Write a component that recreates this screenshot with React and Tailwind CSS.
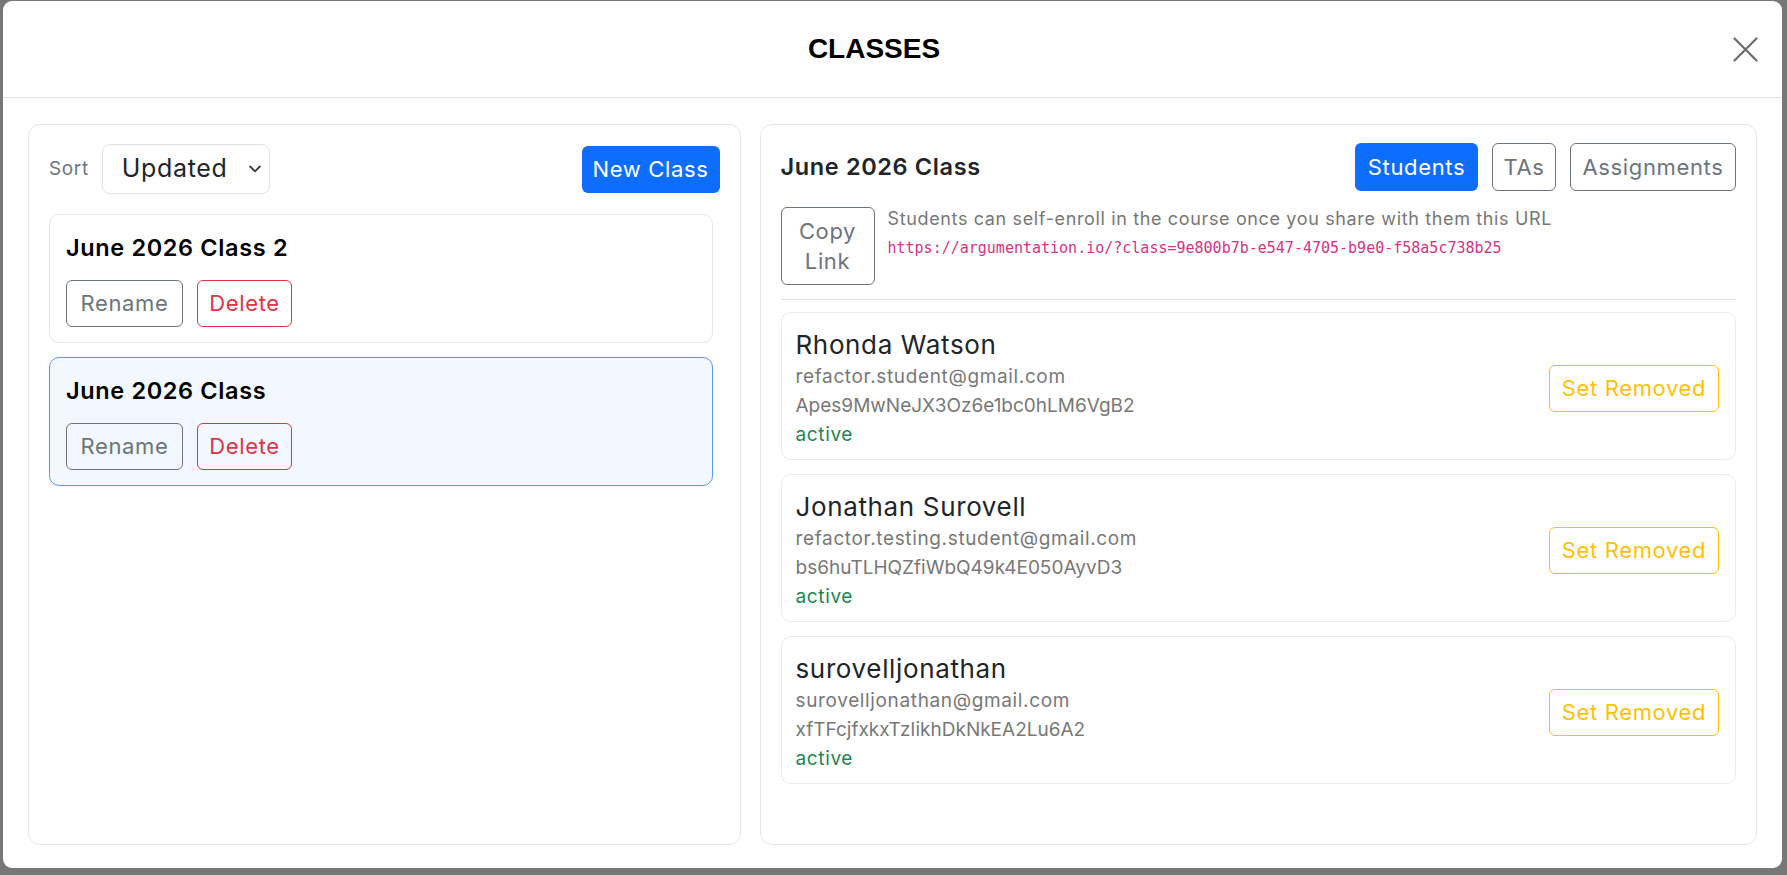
import React from "react";

const classes = [
  { id: "c2", name: "June 2026 Class 2", selected: false },
  { id: "c1", name: "June 2026 Class", selected: true },
];

const students = [
  {
    name: "Rhonda Watson",
    email: "refactor.student@gmail.com",
    uid: "Apes9MwNeJX3Oz6e1bc0hLM6VgB2",
    status: "active",
  },
  {
    name: "Jonathan Surovell",
    email: "refactor.testing.student@gmail.com",
    uid: "bs6huTLHQZfiWbQ49k4E050AyvD3",
    status: "active",
  },
  {
    name: "surovelljonathan",
    email: "surovelljonathan@gmail.com",
    uid: "xfTFcjfxkxTzIikhDkNkEA2Lu6A2",
    status: "active",
  },
];

function CloseIcon() {
  return (
    <svg width="25" height="25" viewBox="0 0 25 25" fill="none">
      <path d="M1.5 1.5L23.5 23.5M23.5 1.5L1.5 23.5" stroke="#6b6b6b" strokeWidth="2.2" strokeLinecap="round" />
    </svg>
  );
}

function Chevron() {
  return (
    <svg width="12" height="8" viewBox="0 0 12 8" fill="none">
      <path d="M1.2 1.5L6 6.3L10.8 1.5" stroke="#343a40" strokeWidth="1.8" strokeLinecap="round" strokeLinejoin="round" />
    </svg>
  );
}

function ClassCard({ name, selected }) {
  return (
    <div
      className={
        selected
          ? "rounded-[10px] border border-[#5b98f5] bg-[#f3f8ff] px-4 pt-[17px] pb-[15px]"
          : "rounded-[10px] border border-[#e6e6e6] bg-white px-4 pt-[17px] pb-[15px]"
      }
    >
      <div className="text-[23.5px] font-semibold leading-[32px] text-black">{name}</div>
      <div className="mt-[16px] flex gap-[14px]">
        <button className="h-[47px] w-[117px] rounded-[6px] border border-[#6c757d] text-[22px] text-[#6c757d]">
          Rename
        </button>
        <button className="h-[47px] w-[95px] rounded-[6px] border border-[#dc3545] text-[22px] text-[#dc3545]">
          Delete
        </button>
      </div>
    </div>
  );
}

function StudentCard({ name, email, uid, status }) {
  return (
    <div className="flex items-center justify-between rounded-[10px] border border-[#ebebeb] pt-[15px] pb-[10px] pl-[14px] pr-4">
      <div className="flex flex-col">
        <div className="text-[26px] leading-[34px] text-[#212529]">{name}</div>
        <div className="text-[19px] leading-[29px] text-[#787878]">{email}</div>
        <div className="text-[19px] leading-[29px] tracking-normal text-[#787878]">{uid}</div>
        <div className="text-[19px] leading-[29px] text-[#198754]">{status}</div>
      </div>
      <button className="h-[47px] w-[170px] rounded-[6px] border border-[#ffc107] text-[22px] text-[#ffc107]">
        Set Removed
      </button>
    </div>
  );
}

export default function App() {
  return (
    <div className="h-[875px] w-[1787px] overflow-hidden bg-[#777777] pt-[1px] pl-[3px] pr-[5px] [font-family:Inter,'Noto_Sans',sans-serif] tracking-[0.04em]">
      <div className="flex h-[867px] flex-col rounded-[9px] bg-white">
        <header className="flex h-[97px] shrink-0 items-center border-b border-[#dee2e6] pl-[12px] pr-[24px]">
          <h1 className="flex-1 text-center text-[28px] font-bold tracking-normal text-black [font-family:'Liberation_Sans',Arial,sans-serif]">
            CLASSES
          </h1>
          <button className="flex h-[25px] w-[25px] items-center justify-center" aria-label="Close">
            <CloseIcon />
          </button>
        </header>

        <div className="grid flex-1 grid-cols-[5fr_7fr] gap-[19px] px-[25px] pt-[26px] pb-[23px]">
          {/* class list */}
          <section className="rounded-[12px] border border-[#e6e6e6] px-5 pt-[19px] pb-5">
            <div className="flex h-[50px] items-center justify-between">
              <div className="flex items-center gap-[13px]">
                <span className="text-[19px] text-[#6c757d]">Sort</span>
                <div className="flex h-[50px] w-[168px] items-center justify-between rounded-[8px] border border-[#dee2e6] pl-[19px] pr-[8px] text-[25px] text-[#212529]">
                  <span>Updated</span>
                  <Chevron />
                </div>
              </div>
              <button className="h-[47px] w-[138px] rounded-[6px] bg-[#0d6efd] text-[22px] text-white">New Class</button>
            </div>
            <div className="mt-[20px] mr-[7px] flex flex-col gap-[14px]">
              {classes.map((c) => (
                <ClassCard key={c.id} name={c.name} selected={c.selected} />
              ))}
            </div>
          </section>

          {/* selected class detail */}
          <section className="rounded-[12px] border border-[#e6e6e6] px-5 pt-[18px] pb-5">
            <div className="flex h-[48px] items-center justify-between">
              <h2 className="text-[23.5px] font-semibold text-[#212529]">June 2026 Class</h2>
              <div className="flex gap-[14px]">
                <button className="h-[48px] w-[123px] rounded-[6px] bg-[#0d6efd] text-[22px] text-white">Students</button>
                <button className="h-[48px] w-[64px] rounded-[6px] border border-[#6c757d] text-[22px] text-[#6c757d]">TAs</button>
                <button className="h-[48px] w-[166px] rounded-[6px] border border-[#6c757d] text-[22px] text-[#6c757d]">
                  Assignments
                </button>
              </div>
            </div>

            <div className="mt-[16px] flex items-start gap-[13px]">
              <button className="flex h-[78px] w-[94px] shrink-0 flex-col items-center justify-center rounded-[6px] border border-[#6c757d] text-[22px] leading-[30px] text-[#6c757d]">
                <span>Copy</span>
                <span>Link</span>
              </button>
              <div className="flex flex-col">
                <div className="text-[18px] leading-[24px] text-[#777777]">
                  Students can self-enroll in the course once you share with them this URL
                </div>
                <code className="mt-[6px] text-[15px] leading-[22px] tracking-normal text-[#d63384] [font-family:'DejaVu_Sans_Mono',monospace]">
                  https://argumentation.io/?class=9e800b7b-e547-4705-b9e0-f58a5c738b25
                </code>
              </div>
            </div>

            <div className="mt-[14px] h-px bg-[#dee2e6]" />

            <div className="mt-[12px] flex flex-col gap-[14px]">
              {students.map((s) => (
                <StudentCard key={s.uid} {...s} />
              ))}
            </div>
          </section>
        </div>
      </div>
    </div>
  );
}
